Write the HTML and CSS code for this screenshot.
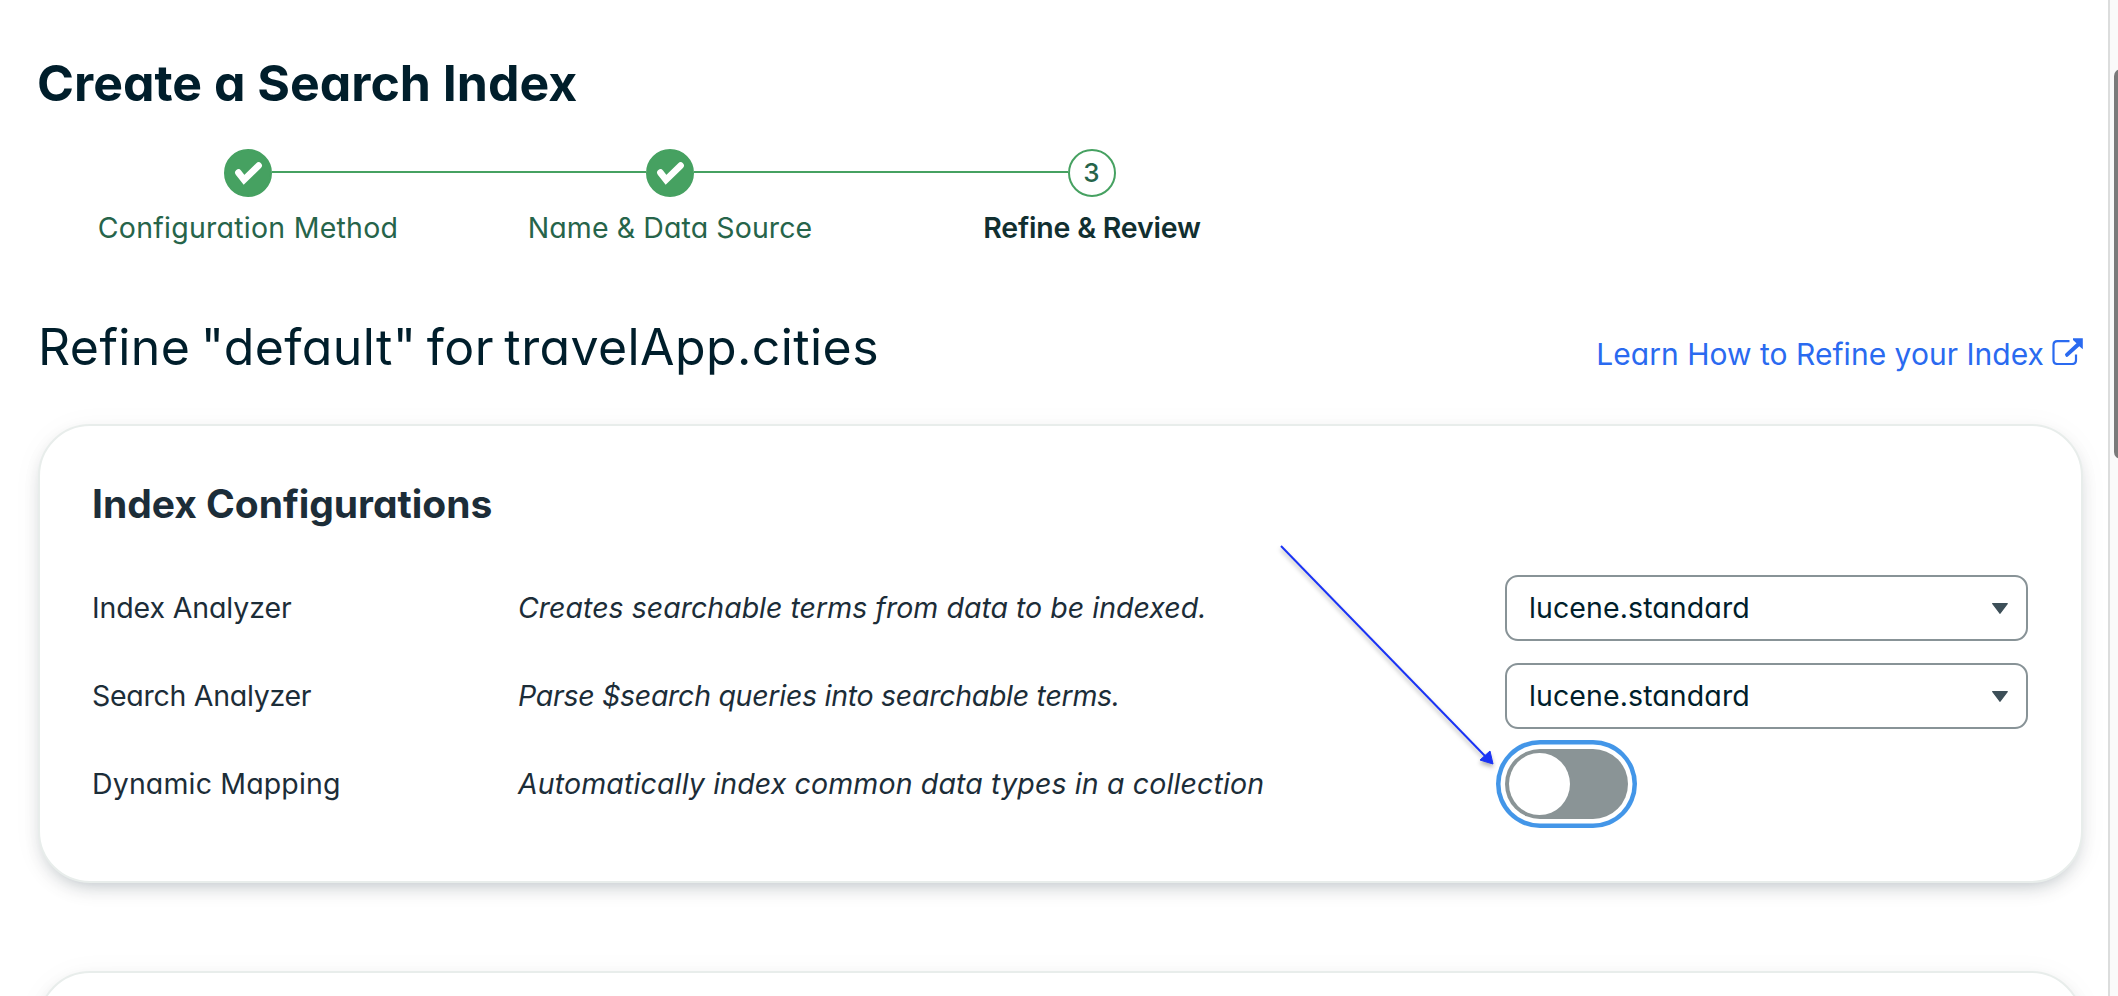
FILE: index.html
```
<!DOCTYPE html>
<html lang="en">
<head>
<meta charset="utf-8">
<title>Create a Search Index</title>
<link rel="stylesheet" href="styles.css">
</head>
<body>
<div class="app">
  <main class="content">
    <h1 class="title">Create a Search Index</h1>
    <ol class="steps">
      <li class="step">
        <div class="track"><span class="line hidden"></span>
          <span class="dot done"><svg viewBox="0 0 48 48" width="48" height="48"><path d="M14.4 23.6L20 30.8L34.6 16.6" fill="none" stroke="#fff" stroke-width="6.6" stroke-linecap="round"/></svg></span>
          <span class="line"></span></div>
        <span class="label l1">Configuration Method</span>
      </li>
      <li class="step">
        <div class="track"><span class="line"></span>
          <span class="dot done"><svg viewBox="0 0 48 48" width="48" height="48"><path d="M14.4 23.6L20 30.8L34.6 16.6" fill="none" stroke="#fff" stroke-width="6.6" stroke-linecap="round"/></svg></span>
          <span class="line"></span></div>
        <span class="label l2">Name &amp; Data Source</span>
      </li>
      <li class="step">
        <div class="track"><span class="line"></span><span class="dot number">3</span><span class="line hidden"></span></div>
        <span class="label current">Refine &amp; Review</span>
      </li>
    </ol>
    <div class="subhead">
      <h2 class="subtitle">Refine "default" for travelApp.cities</h2>
      <a class="link"><span>Learn How to Refine your Index</span><svg class="ext" viewBox="-0.5 -1 32 28" width="32" height="28"><path d="M18 3.2H6Q2 3.2 2 7.2V22Q2 26 6 26H20.5Q24.5 26 24.5 22V16.5" fill="none" stroke="#2a6af0" stroke-width="2.2"/><path d="M21.5 .2H31.3V11.2L27.8 8.2L16.4 18.6Q15.4 19.4 14.4 18.4L13.8 17.6Q13 16.6 14 15.6L25 5.2L21.5 2Z" fill="#2a6af0"/></svg></a>
    </div>
    <section class="card">
      <h3 class="card-title">Index Configurations</h3>
      <div class="rows">
        <span class="name n1">Index Analyzer</span>
        <span class="desc d1">Creates searchable terms from data to be indexed.</span>
        <div class="select"><span>lucene.standard</span><svg viewBox="0 0 18 12" width="18" height="12"><path d="M1.8 1.6H16.2L9 11.2Z" fill="#3d4f58" stroke="#3d4f58" stroke-width="1.4" stroke-linejoin="round"/></svg></div>
        <span class="name n2">Search Analyzer</span>
        <span class="desc d2">Parse $search queries into searchable terms.</span>
        <div class="select"><span>lucene.standard</span><svg viewBox="0 0 18 12" width="18" height="12"><path d="M1.8 1.6H16.2L9 11.2Z" fill="#3d4f58" stroke="#3d4f58" stroke-width="1.4" stroke-linejoin="round"/></svg></div>
        <span class="name n3">Dynamic Mapping</span>
        <span class="desc d3">Automatically index common data types in a collection</span>
        <div class="toggle"><span class="knob"></span></div>
      </div>
    </section>
    <section class="card"></section>
  </main>
  <aside class="scrollbar"><div class="thumb"></div></aside>
  <svg class="arrow" viewBox="0 0 230 236" width="230" height="236"><path d="M6 6L210 216" stroke="#1a33f5" stroke-width="2"/><path d="M218 224L205 220L215 211Z" fill="#1a33f5" stroke="#1a33f5"/></svg>
</div>
</body>
</html>
```
FILE: styles.css
```
* { box-sizing: border-box; }
body { margin: 0; background: #fff; overflow: hidden; }
.app {
  position: relative;
  display: flex;
  height: 996px;
  overflow: hidden;
  font-family: Inter, "Liberation Sans", sans-serif;
  font-feature-settings: "cv11";
  font-size: 28.5px;
  line-height: 40px;
  color: #1c2d38;
}
.content { width: 2108px; flex: none; padding: 53px 25px 0 38px; overflow: hidden; }
.title { margin: 0 0 0 -1px; font-size: 50px; line-height: 60px; font-weight: 700; color: #001e2b; }

.steps { display: flex; width: 1266px; margin: 36px 0 0 -1px; padding: 0; list-style: none; }
.step { flex: 1; display: flex; flex-direction: column; align-items: center; gap: 11px; }
.track { display: flex; align-items: center; width: 100%; }
.line { flex: 1; height: 2px; margin-bottom: 2px; background: #46a161; }
.hidden { visibility: hidden; }
.dot {
  width: 48px; height: 48px; border-radius: 50%;
  display: flex; align-items: center; justify-content: center;
  border: 2px solid #46a161; color: #26644a;
  font-size: 26px; font-weight: 500;
}
.dot svg { flex: none; }
.done { background: #46a161; }
.number { padding-right: 1px; }
.label { color: #26644a; white-space: nowrap; }
.l1 { letter-spacing: .25px; }
.l2 { letter-spacing: .1px; }
.current { color: #112f30; font-weight: 600; letter-spacing: -.2px; }

.subhead { display: flex; justify-content: space-between; align-items: baseline; margin-top: 69px; }
.subtitle { margin: 0; font-size: 50px; line-height: 60px; font-weight: 400; letter-spacing: .4px; word-spacing: -4px; color: #001e2b; }
.link { display: flex; align-items: baseline; gap: 7px; color: #2a6af0; font-size: 30px; letter-spacing: .03px; }

.card {
  margin-top: 47px;
  height: 459px;
  padding: 54px 53px 0 52px;
  border: 2px solid #e8edeb;
  border-radius: 52px;
  background: #fff;
  box-shadow: 0 8px 20px -8px rgba(0, 30, 43, .3), 0 4px 32px rgba(0, 30, 43, .04);
}
.card + .card { margin-top: 88px; }
.card-title { margin: 0; font-size: 39px; line-height: 48px; font-weight: 700; letter-spacing: -.03px; }
.rows {
  display: grid;
  grid-template-columns: 426px 987px 523px;
  grid-auto-rows: 66px;
  row-gap: 22px;
  align-items: center;
  margin-top: 47px;
  white-space: nowrap;
}
.desc { font-style: italic; }
.n1 { letter-spacing: -.12px; }
.n2 { letter-spacing: -.28px; }
.n3 { letter-spacing: .15px; }
.d1 { letter-spacing: .02px; }
.d2 { letter-spacing: -.28px; }
.d3 { letter-spacing: .14px; }
.select {
  height: 66px;
  display: flex; align-items: center; justify-content: space-between;
  padding: 0 17px 0 22px;
  border: 2px solid #889397; border-radius: 13px;
  color: #001e2b;
  letter-spacing: .1px;
}
.toggle {
  width: 123px; height: 70px; padding: 4px;
  border-radius: 35px;
  background: #8a9496;
  box-shadow: 0 0 0 4.5px #fff, 0 0 0 9px #4396e8;
}
.knob { display: block; width: 61px; height: 62px; border-radius: 50%; background: #fff; }

.scrollbar { flex: 1; border-left: 2px solid #dcdddd; background: #fafafa; padding: 69px 0 0 4px; overflow: hidden; }
.thumb { width: 14px; height: 390px; border-radius: 7px; background: #7a7a7a; }

/* Annotation drawn over the page */
.arrow { position: absolute; left: 1275px; top: 540px; filter: drop-shadow(0 3px 2px rgba(0, 0, 0, .3)); }
```
